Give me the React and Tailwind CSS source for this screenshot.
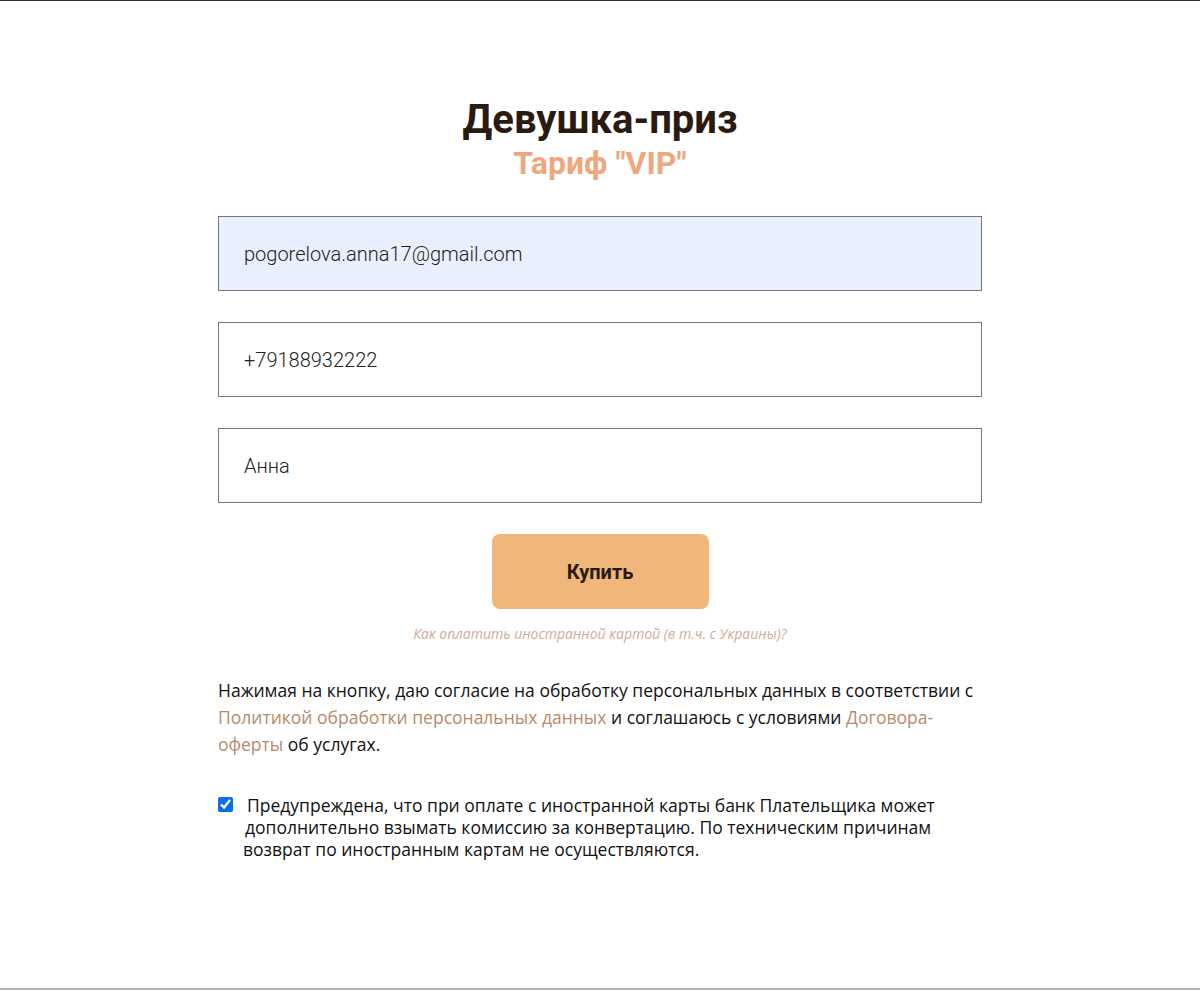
import React from 'react';

// Форма оплаты тарифа
function Field({ value, filled }) {
  return (
    <div
      className={
        'h-[75px] w-full border border-[#76767a] flex items-center pl-[25px] text-[20px] font-light text-[#222] ' +
        (filled ? 'bg-[#e8f0fe]' : 'bg-white')
      }
      style={{ fontFamily: 'Roboto, sans-serif' }}
    >
      {value}
    </div>
  );
}

export default function App() {
  return (
    <div className="min-h-[990px] bg-white flex flex-col border-t border-[#3a2e22] border-b-2 border-b-[#b5b5b5]">
      <div className="w-[764px] mx-auto pt-[95px] flex flex-col">
        <div className="text-center" style={{ fontFamily: 'Roboto, sans-serif' }}>
          <h1 className="text-[40px] leading-[48px] font-bold text-[#2b1a10]">Девушка-приз</h1>
          <h2 className="text-[32px] leading-[38px] font-bold text-[#eda882]">Тариф "VIP"</h2>
        </div>

        <div className="mt-[34px] flex flex-col gap-[31px]">
          <Field value="pogorelova.anna17@gmail.com" filled />
          <Field value="+79188932222" />
          <Field value="Анна" />
        </div>

        <div className="mt-[31px] flex justify-center">
          <button
            className="w-[217px] h-[75px] rounded-[8px] bg-[#efb87a] text-[20px] font-bold text-[#2b1a10]"
            style={{ fontFamily: 'Roboto, sans-serif' }}
          >
            Купить
          </button>
        </div>

        <p
          className="mt-[16px] text-center italic text-[14px] leading-[18px] text-[#d0aa96]"
          style={{ fontFamily: '"Open Sans", sans-serif' }}
        >
          Как оплатить иностранной картой (в т.ч. с Украины)?
        </p>

        <p
          className="mt-[34px] text-[17.5px] leading-[27px] text-[#111]"
          style={{ fontFamily: '"Open Sans", sans-serif' }}
        >
          Нажимая на кнопку, даю согласие на обработку персональных данных в соответствии с{' '}
          <span className="text-[#b88a6c]">Политикой обработки персональных данных</span> и соглашаюсь с условиями{' '}
          <span className="text-[#b88a6c]">Договора-оферты</span> об услугах.
        </p>

        <div
          className="mt-[36px] flex items-start text-[17.5px] leading-[22px] text-[#111]"
          style={{ fontFamily: '"Open Sans", sans-serif' }}
        >
          <input type="checkbox" defaultChecked className="mt-[3px] w-[15px] h-[15px] accent-[#0b6ee8] shrink-0" />
          <div className="flex flex-col">
            <span className="pl-[14px]">Предупреждена, что при оплате с иностранной карты банк Плательщика может</span>
            <span className="pl-[12px]">дополнительно взымать комиссию за конвертацию. По техническим причинам</span>
            <span className="pl-[10px]">возврат по иностранным картам не осуществляются.</span>
          </div>
        </div>
      </div>
    </div>
  );
}
